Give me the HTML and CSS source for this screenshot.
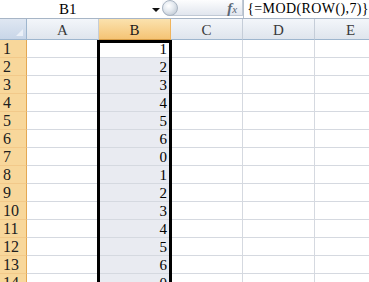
FILE: index.html
```html
<!DOCTYPE html>
<html>
<head>
<meta charset="utf-8">
<link rel="stylesheet" href="styles.css">
</head>
<body>
<div class="app">
  <div class="fbar">
    <div class="namebox"><span class="name">B1</span><span class="drop"></span></div>
    <div class="pill">
      <span class="knob"></span>
      <span class="fx"><i>f</i><span class="x">x</span></span>
    </div>
    <div class="formula">{=MOD(ROW(),7)}</div>
  </div>
  <div class="sheet">
    <div class="grid">
      <div class="corner"><span class="tri"></span></div>
      <div class="ch">A</div><div class="ch sel">B</div><div class="ch">C</div><div class="ch">D</div><div class="ch">E</div>

      <div class="rh">1</div><div class="c"></div><div class="c b act">1</div><div class="c"></div><div class="c"></div><div class="c"></div>
      <div class="rh">2</div><div class="c"></div><div class="c b">2</div><div class="c"></div><div class="c"></div><div class="c"></div>
      <div class="rh">3</div><div class="c"></div><div class="c b">3</div><div class="c"></div><div class="c"></div><div class="c"></div>
      <div class="rh">4</div><div class="c"></div><div class="c b">4</div><div class="c"></div><div class="c"></div><div class="c"></div>
      <div class="rh">5</div><div class="c"></div><div class="c b">5</div><div class="c"></div><div class="c"></div><div class="c"></div>
      <div class="rh">6</div><div class="c"></div><div class="c b">6</div><div class="c"></div><div class="c"></div><div class="c"></div>
      <div class="rh">7</div><div class="c"></div><div class="c b">0</div><div class="c"></div><div class="c"></div><div class="c"></div>
      <div class="rh">8</div><div class="c"></div><div class="c b">1</div><div class="c"></div><div class="c"></div><div class="c"></div>
      <div class="rh">9</div><div class="c"></div><div class="c b">2</div><div class="c"></div><div class="c"></div><div class="c"></div>
      <div class="rh">10</div><div class="c"></div><div class="c b">3</div><div class="c"></div><div class="c"></div><div class="c"></div>
      <div class="rh">11</div><div class="c"></div><div class="c b">4</div><div class="c"></div><div class="c"></div><div class="c"></div>
      <div class="rh">12</div><div class="c"></div><div class="c b">5</div><div class="c"></div><div class="c"></div><div class="c"></div>
      <div class="rh">13</div><div class="c"></div><div class="c b">6</div><div class="c"></div><div class="c"></div><div class="c"></div>
      <div class="rh">14</div><div class="c"></div><div class="c b">0</div><div class="c"></div><div class="c"></div><div class="c"></div>
    </div>
    <div class="selbox"></div>
  </div>
</div>
</body>
</html>
```
FILE: styles.css
```css
html, body {
  margin: 0;
  padding: 0;
  background: #ffffff;
}
.app {
  width: 369px;
  height: 282px;
  overflow: hidden;
  font-family: "Liberation Serif", "DejaVu Serif", serif;
  color: #000;
}
.fbar {
  height: 18px;
  border-bottom: 1px solid #a7b5c6;
  display: flex;
  background: #fff;
}
.namebox {
  width: 163px;
  display: flex;
  align-items: center;
  position: relative;
}
.name {
  flex: 1;
  text-align: center;
  font-size: 15px;
  padding-right: 27px;
  line-height: 18px;
}
.drop {
  position: absolute;
  left: 152px;
  top: 8px;
  width: 0;
  height: 0;
  border-left: 4px solid transparent;
  border-right: 4px solid transparent;
  border-top: 4px solid #111;
}
.pill {
  width: 80px;
  height: 15px;
  margin-top: -1px;
  display: flex;
  align-items: center;
  justify-content: space-between;
  background: linear-gradient(#fdfdfe, #e1e6ee);
  border: 1px solid #c0c9d5;
  border-left: none;
  border-radius: 0 0 0 8px;
}
.knob {
  width: 16px;
  height: 16px;
  border-radius: 50%;
  margin-top: 1px;
  background: radial-gradient(circle at 40% 35%, #ffffff 0%, #e6ebf1 40%, #b3bdc9 100%);
  border: 1px solid #a9b4c2;
  box-sizing: border-box;
}
.fx {
  font-family: "Liberation Serif", serif;
  color: #5b6775;
  margin-right: 5px;
  margin-top: 1px;
}
.fx i { font-size: 15px; font-weight: bold; }
.fx .x { font-style: italic; font-size: 11px; }
.formula {
  flex: 1;
  border-left: 1px solid #b4bfcc;
  font-size: 14px;
  padding-left: 3px;
  letter-spacing: 0.4px;
  line-height: 18px;
  white-space: nowrap;
}
.sheet {
  position: relative;
}
.grid {
  display: grid;
  grid-template-columns: 27px repeat(5, 72px);
  grid-template-rows: 21px repeat(14, 18px);
}
.grid > div {
  box-sizing: border-box;
  border-right: 1px solid #d5d9e0;
  border-bottom: 1px solid #d5d9e0;
}
.corner {
  background: linear-gradient(#dfe7f2, #c8d6e8);
  border-right: 1px solid #9eb6ce !important;
  border-bottom: 1px solid #9eb6ce !important;
  position: relative;
}
.tri {
  position: absolute;
  right: 3px;
  bottom: 3px;
  width: 0;
  height: 0;
  border-left: 7px solid transparent;
  border-bottom: 7px solid #eaf0f8;
}
.ch {
  background: linear-gradient(#f3f6fa, #dfe5ed);
  border-right: 1px solid #c5cdd8 !important;
  border-bottom: 1px solid #9eb6ce !important;
  font-size: 15px;
  text-align: center;
  line-height: 22px;
  color: #3a3a3a;
}
.ch.sel {
  background: linear-gradient(#fbe2ae, #f5c475);
  border-right: 1px solid #f0b45c !important;
  border-bottom: 1px solid #d59b45 !important;
  color: #1a1a1a;
}
.rh {
  background: #f8d79b;
  border-right: 1px solid #e4a853 !important;
  border-bottom: 1px solid #f2c98a !important;
  font-size: 16px;
  padding-left: 3px;
  display: flex;
  align-items: flex-end;
  line-height: 16px;
  color: #202020;
}
.c {
  background: #fff;
  font-size: 15px;
  display: flex;
  align-items: flex-end;
  justify-content: flex-end;
  padding-right: 3px;
  line-height: 16px;
}
.c.b {
  background: #e9ebf1;
}
.c.b.act {
  background: #fff;
}
.selbox {
  position: absolute;
  left: 97px;
  top: 21px;
  width: 75px;
  height: 300px;
  box-sizing: border-box;
  border: 3px solid #000;
  border-bottom: none;
}
```
